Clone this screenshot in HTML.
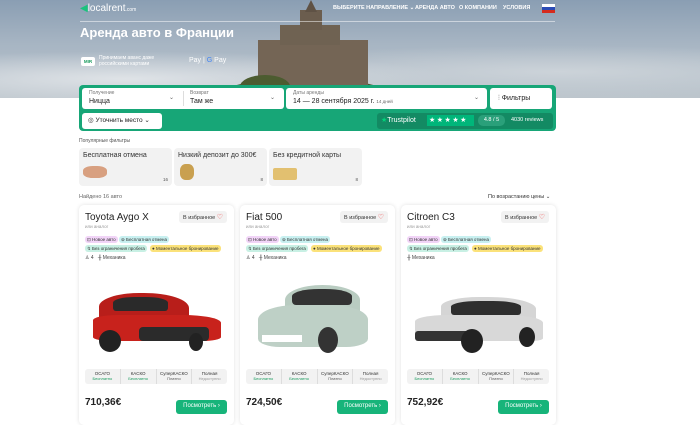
<!DOCTYPE html><html><head><meta charset="utf-8"><style>
*{box-sizing:border-box;margin:0;padding:0}
body{width:700px;height:411px;overflow:hidden;font-family:"Liberation Sans",sans-serif;background:#fff;position:relative;color:#222}
.a{position:absolute}
.hero{left:0;top:0;width:700px;height:98px;background:linear-gradient(180deg,#8a9eb3 0%,#a7b5c3 45%,#bcc5cc 100%);overflow:hidden}
.nav{font-size:5.5px;font-weight:bold;color:#fff}
.wb{background:#fff;border-radius:3px}
.lbl{font-size:5px;color:#777}
.val{font-size:7px;color:#222}
.tile{background:#f2f2f2;border-radius:4px;top:148px;width:93px;height:38px}
.tile b{font-weight:normal;font-size:7px;position:absolute;left:4px;top:4px;color:#333}
.tile i{font-style:normal;font-size:4.5px;position:absolute;right:4px;bottom:4px;color:#555}
.card{top:205px;width:155px;height:220px;background:#fff;border-radius:5px;box-shadow:0 0 4px rgba(0,0,0,.12)}
.card h2{position:absolute;left:6px;top:7px;font-size:10px;font-weight:normal}
.fav{position:absolute;right:7px;top:6px;background:#f2f2f2;border-radius:3px;font-size:5.5px;padding:2px 4px;color:#333}
.fav span{color:#e44;font-size:7px}
.an{position:absolute;left:6px;top:19px;font-size:4.5px;color:#999}
.tg{position:absolute;font-size:4.5px;padding:1px 2px;border-radius:3px;color:#333;height:7px;line-height:5px}
.sp{position:absolute;left:6px;top:50px;font-size:5px;color:#444}
.ins{position:absolute;left:6px;top:164px;width:142px;height:15px;background:#f2f2f2;border-radius:3px;display:flex}
.ins div{flex:1;text-align:center;font-size:4.5px;padding-top:2px;color:#333;border-right:1px solid #ddd}
.ins div:last-child{border:none}
.ins small{display:block;font-size:4px;color:#1a9b5e}
.pr{position:absolute;left:6px;top:192px;font-size:10px;font-weight:bold}
.btn{position:absolute;right:7px;top:195px;width:51px;height:14px;background:#17b47a;border-radius:3px;color:#fff;font-size:6px;text-align:center;line-height:13px}
.w{position:absolute;border-radius:50%;background:#222}
</style></head><body>
<div class="a hero">
 <div class="a" style="left:0;top:30px;width:700px;height:70px;background:radial-gradient(ellipse at 18% 70%,#dfe3e7 0,transparent 40%),radial-gradient(ellipse at 80% 60%,#ccd3d9 0,transparent 45%)"></div>
 <div class="a" style="left:215px;top:78px;width:180px;height:40px;background:#485530;border-radius:50% 50% 0 0"></div>
 <div class="a" style="left:258px;top:40px;width:110px;height:48px;background:#746555"></div>
 <div class="a" style="left:280px;top:25px;width:60px;height:20px;background:#6f6252"></div>
 <div class="a" style="left:300px;top:10px;width:22px;height:20px;background:#6b5d4e"></div>
 <div class="a" style="left:305px;top:0;width:12px;height:12px;background:#5f5245;clip-path:polygon(50% 0,100% 100%,0 100%)"></div>
 <div class="a" style="left:240px;top:75px;width:50px;height:23px;background:#4c5c30;border-radius:50% 50% 0 0"></div>
 <div class="a" style="left:80px;top:21px;width:475px;height:1px;background:rgba(255,255,255,.5)"></div>
</div>
<div class="a" style="left:80px;top:3px;font-size:10px;color:#fff"><span style="color:#19c37d">◀</span>localrent<span style="font-size:5px">.com</span></div>
<div class="a nav" style="left:333px;top:5px">ВЫБЕРИТЕ НАПРАВЛЕНИЕ ⌄</div>
<div class="a nav" style="left:415px;top:5px">АРЕНДА АВТО</div>
<div class="a nav" style="left:459px;top:5px">О КОМПАНИИ</div>
<div class="a nav" style="left:503px;top:5px">УСЛОВИЯ</div>
<div class="a" style="left:542px;top:4px;width:13px;height:9px;background:linear-gradient(#fff 33%,#2b4bb5 33% 66%,#d52b1e 66%)"></div>
<div class="a" style="left:80px;top:25px;font-size:13px;font-weight:bold;color:#fff">Аренда авто в Франции</div>
<div class="a" style="left:81px;top:57px;width:14px;height:9px;background:#fff;border-radius:2px;font-size:4.5px;font-weight:bold;color:#1a9b5e;text-align:center;line-height:9px">MIR</div>
<div class="a" style="left:99px;top:56px;font-size:5px;color:#fff;line-height:5.5px">Принимаем аванс даже<br>российскими картами</div>
<div class="a" style="left:189px;top:57px;font-size:7px;color:#fff">Pay | <span style="color:#4285f4">G</span> Pay</div>
<div class="a" style="left:79px;top:85px;width:477px;height:46px;background:#17a677;border-radius:4px"></div>
<div class="a wb" style="left:82px;top:88px;width:202px;height:21px"></div>
<div class="a" style="left:183px;top:91px;width:1px;height:15px;background:#ddd"></div>
<div class="a lbl" style="left:89px;top:90px">Получение</div><div class="a val" style="left:89px;top:98px">Ницца</div><div class="a" style="left:169px;top:94px;font-size:6px;color:#666">⌄</div>
<div class="a lbl" style="left:190px;top:90px">Возврат</div><div class="a val" style="left:190px;top:98px">Там же</div><div class="a" style="left:270px;top:94px;font-size:6px;color:#666">⌄</div>
<div class="a wb" style="left:286px;top:88px;width:201px;height:21px"></div>
<div class="a lbl" style="left:293px;top:90px">Даты аренды</div><div class="a val" style="left:293px;top:98px">14 — 28 сентября 2025 г. <span style="font-size:4.5px;color:#666">14 дней</span></div><div class="a" style="left:474px;top:94px;font-size:6px;color:#666">⌄</div>
<div class="a wb" style="left:490px;top:88px;width:62px;height:21px;font-size:7px;line-height:21px;padding-left:8px">⫶ Фильтры</div>
<div class="a wb" style="left:82px;top:113px;width:80px;height:16px;font-size:6.5px;line-height:16px;padding-left:6px">◎ Уточнить место ⌄</div>
<div class="a" style="left:377px;top:113px;width:176px;height:16px;background:#138a63;border-radius:3px"></div>
<div class="a" style="left:381px;top:116px;font-size:7px;color:#fff"><span style="color:#00d27a">★</span>Trustpilot</div>
<div class="a" style="left:427px;top:115px;width:47px;height:11px;background:#00b67a;color:#fff;font-size:7px;letter-spacing:1.5px;line-height:11px;padding-left:2px">★★★★★</div>
<div class="a" style="left:478px;top:115px;width:27px;height:11px;background:#2aa07a;border-radius:5px;color:#fff;font-size:5.5px;text-align:center;line-height:11px">4.8 / 5</div>
<div class="a" style="left:511px;top:117px;font-size:5.5px;color:#fff">4030 reviews</div>
<div class="a" style="left:79px;top:138px;font-size:5px;color:#555">Популярные фильтры</div>
<div class="a tile" style="left:79px"><b>Бесплатная отмена</b><div class="a" style="left:4px;top:18px;width:24px;height:12px;background:#d8a080;border-radius:40%"></div><i>16</i></div>
<div class="a tile" style="left:174px"><b>Низкий депозит до 300€</b><div class="a" style="left:6px;top:16px;width:14px;height:16px;background:#c9a050;border-radius:40%"></div><i>8</i></div>
<div class="a tile" style="left:269px"><b>Без кредитной карты</b><div class="a" style="left:4px;top:20px;width:24px;height:12px;background:#e2c070;border-radius:2px"></div><i>8</i></div>
<div class="a" style="left:79px;top:194px;font-size:5.5px;color:#666">Найдено 16 авто</div>
<div class="a" style="left:488px;top:194px;font-size:5.5px;color:#333">По возрастанию цены ⌄</div>

<div class="a card" style="left:79px"><h2>Toyota Aygo X</h2><div class="fav">В избранное <span>♡</span></div><div class="an">или аналог</div>
<div class="tg" style="left:6px;top:31px;background:#f1d4f7">⊡ Новое авто</div><div class="tg" style="left:40px;top:31px;background:#c8f0f0">⊚ Бесплатная отмена</div>
<div class="tg" style="left:6px;top:40px;background:#c8f0e4">↯ Без ограничения пробега</div><div class="tg" style="left:71px;top:40px;background:#fbe27a">● Моментальное бронирование</div>
<div class="sp">♙ 4 &nbsp; ╫ Механика</div>
<div class="a" style="left:20px;top:88px;width:90px;height:30px;background:#b81e1a;border-radius:45% 50% 10% 10%"></div>
<div class="a" style="left:34px;top:92px;width:55px;height:14px;background:#2a2a2a;border-radius:40% 40% 3px 3px"></div>
<div class="a" style="left:14px;top:110px;width:128px;height:26px;background:#c8221c;border-radius:20% 30% 15% 15%"></div>
<div class="a" style="left:60px;top:122px;width:70px;height:14px;background:#2b2b2b;border-radius:4px"></div>
<div class="w" style="left:20px;top:125px;width:22px;height:22px"></div><div class="w" style="left:110px;top:128px;width:14px;height:18px"></div>
<div class="ins"><div>ОСАГО<small>Бесплатно</small></div><div>КАСКО<small>Бесплатно</small></div><div>СуперКАСКО<small style="color:#555">Платно</small></div><div>Полная<small style="color:#999">Недоступно</small></div></div>
<div class="pr">710,36€</div><div class="btn">Посмотреть ›</div></div>

<div class="a card" style="left:240px"><h2>Fiat 500</h2><div class="fav">В избранное <span>♡</span></div><div class="an">или аналог</div>
<div class="tg" style="left:6px;top:31px;background:#f1d4f7">⊡ Новое авто</div><div class="tg" style="left:40px;top:31px;background:#c8f0f0">⊚ Бесплатная отмена</div>
<div class="tg" style="left:6px;top:40px;background:#c8f0e4">↯ Без ограничения пробега</div><div class="tg" style="left:71px;top:40px;background:#fbe27a">● Моментальное бронирование</div>
<div class="sp">♙ 4 &nbsp; ╫ Механика</div>
<div class="a" style="left:45px;top:80px;width:75px;height:30px;background:#b9ccc1;border-radius:50% 50% 10% 10%"></div>
<div class="a" style="left:52px;top:84px;width:60px;height:16px;background:#333;border-radius:45% 45% 4px 4px"></div>
<div class="a" style="left:18px;top:100px;width:110px;height:42px;background:#bed0c6;border-radius:35% 35% 20% 20%"></div>
<div class="a" style="left:22px;top:130px;width:40px;height:7px;background:#fff"></div>
<div class="w" style="left:78px;top:122px;width:20px;height:26px;background:#333"></div>
<div class="ins"><div>ОСАГО<small>Бесплатно</small></div><div>КАСКО<small>Бесплатно</small></div><div>СуперКАСКО<small style="color:#555">Платно</small></div><div>Полная<small style="color:#999">Недоступно</small></div></div>
<div class="pr">724,50€</div><div class="btn">Посмотреть ›</div></div>

<div class="a card" style="left:401px"><h2>Citroen C3</h2><div class="fav">В избранное <span>♡</span></div><div class="an">или аналог</div>
<div class="tg" style="left:6px;top:31px;background:#f1d4f7">⊡ Новое авто</div><div class="tg" style="left:40px;top:31px;background:#c8f0f0">⊚ Бесплатная отмена</div>
<div class="tg" style="left:6px;top:40px;background:#c8f0e4">↯ Без ограничения пробега</div><div class="tg" style="left:71px;top:40px;background:#fbe27a">● Моментальное бронирование</div>
<div class="sp">╫ Механика</div>
<div class="a" style="left:40px;top:92px;width:95px;height:24px;background:#d5d5d5;border-radius:40% 50% 5% 5%"></div>
<div class="a" style="left:50px;top:96px;width:70px;height:14px;background:#2e2e2e;border-radius:40% 40% 3px 3px"></div>
<div class="a" style="left:14px;top:110px;width:128px;height:26px;background:#d8d8d8;border-radius:25% 30% 10% 10%"></div>
<div class="a" style="left:14px;top:126px;width:55px;height:10px;background:#333;border-radius:3px"></div>
<div class="w" style="left:60px;top:124px;width:22px;height:24px"></div><div class="w" style="left:118px;top:122px;width:16px;height:20px"></div>
<div class="ins"><div>ОСАГО<small>Бесплатно</small></div><div>КАСКО<small>Бесплатно</small></div><div>СуперКАСКО<small style="color:#555">Платно</small></div><div>Полная<small style="color:#999">Недоступно</small></div></div>
<div class="pr">752,92€</div><div class="btn">Посмотреть ›</div></div>
</body></html>
